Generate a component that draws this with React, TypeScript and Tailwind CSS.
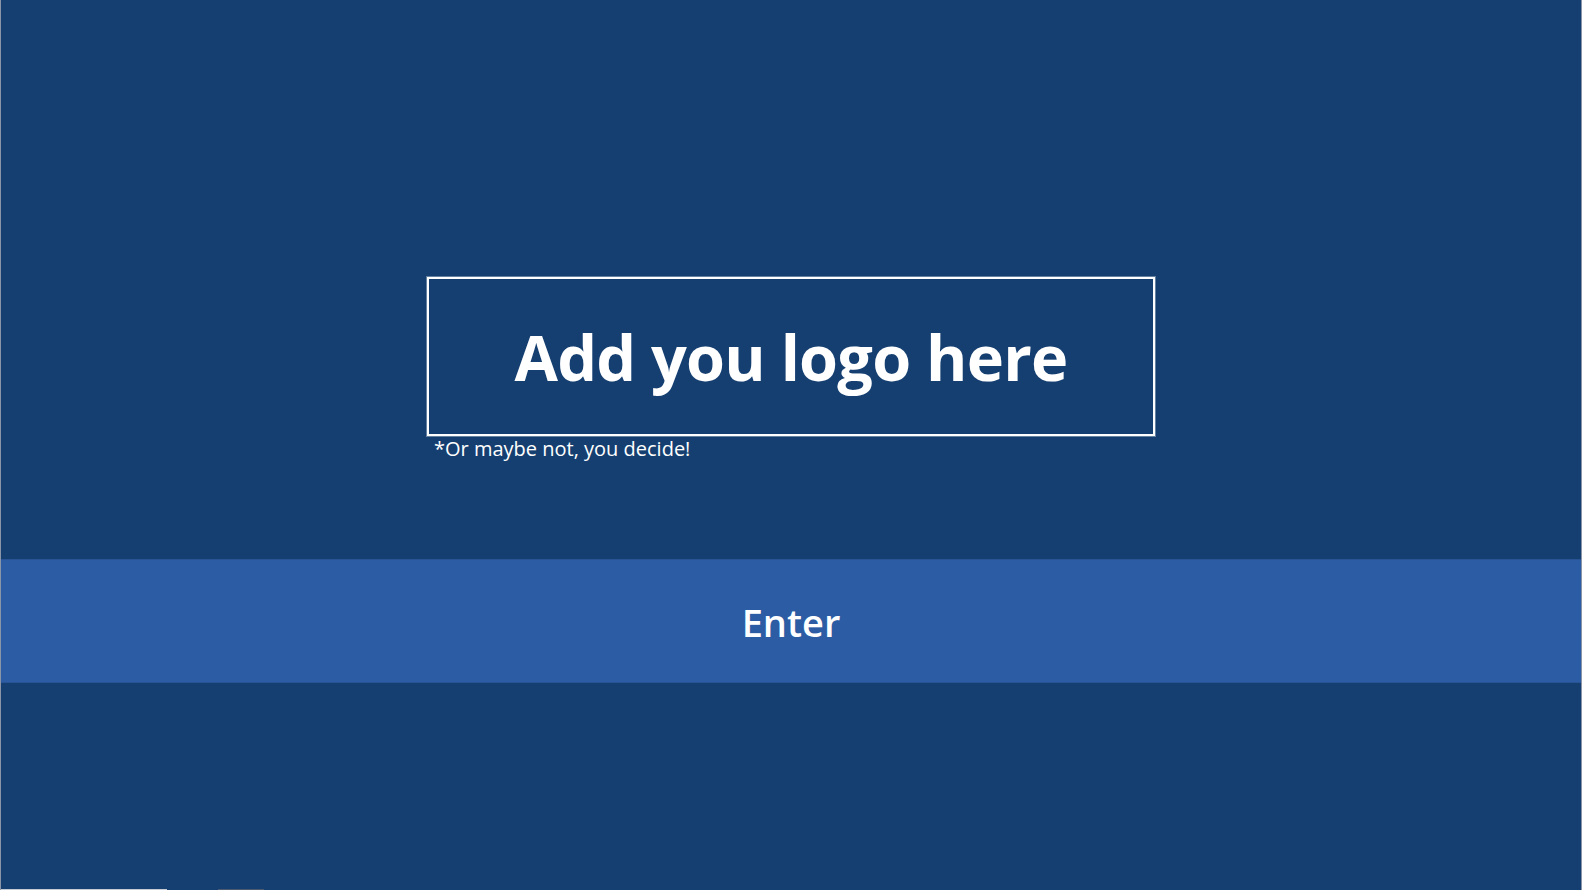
export default function App() {
  return (
    <div
      className="flex h-[890px] w-full flex-col border-x border-[#8a96a8] bg-[#153f70] text-white"
      style={{ fontFamily: '"Open Sans", "Noto Sans", sans-serif' }}
    >
      <div className="h-[277px]" />
      <div className="ml-[426px] flex h-[159px] w-[728px] items-center justify-center border-2 border-white shadow-[0_0_0_1px_rgba(255,255,255,0.35)]">
        <span className="text-[63px] font-bold leading-none tracking-[-0.75px]">Add you logo here</span>
      </div>
      <div className="ml-[433px] -mt-px text-[20px] leading-[28px]">*Or maybe not, you decide!</div>
      <div className="h-[96px]" />
      <button className="flex h-[124px] w-full items-center justify-center border-y border-[#285394] bg-[#2b5ca4] pt-[3px] text-[38px] font-semibold">
        Enter
      </button>
      <div className="flex-1" />
      <div className="flex h-px">
        <div className="w-[166px] bg-[#c7ccd4]" />
        <div className="w-[51px]" />
        <div className="w-[46px] bg-[#4a5a70]" />
      </div>
    </div>
  );
}
